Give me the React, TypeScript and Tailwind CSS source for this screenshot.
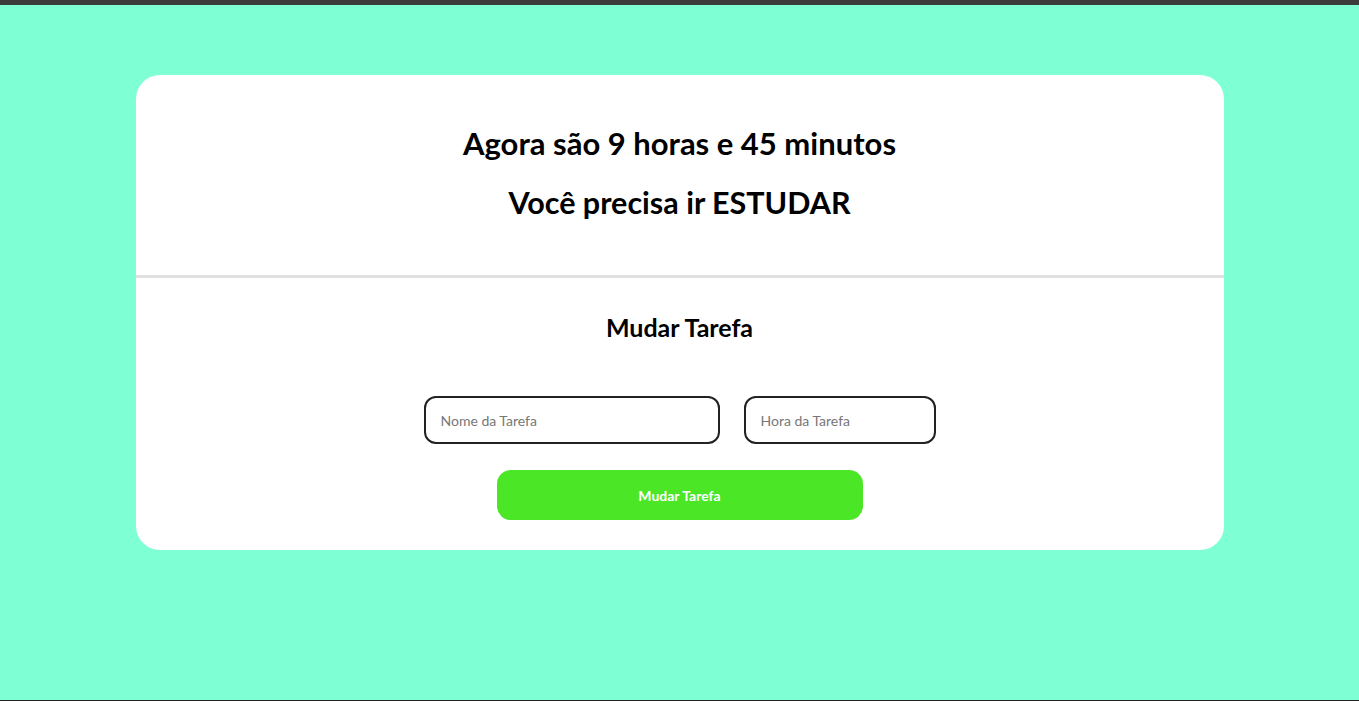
export default function App() {
    return (
        <div className="min-h-screen flex flex-col bg-[#7fffd4] font-['Lato',sans-serif]">
            <div className="h-[5px] bg-[#3c3c3c]" />
            <main className="flex-1 flex flex-col items-center pt-[70px]">
                <div className="w-[1088px] bg-white rounded-[24px] overflow-hidden">
                    {/* Status */}
                    <section className="pt-[50px] pb-[55px] flex flex-col items-center gap-[23px] text-black">
                        <h1 className="text-[31px] leading-[36px] font-bold">Agora são 9 horas e 45 minutos</h1>
                        <h2 className="text-[30.5px] leading-[36px] font-bold">Você precisa ir ESTUDAR</h2>
                    </section>

                    <div className="h-[3px] bg-[#e0e0e0]" />

                    {/* Form */}
                    <section className="pt-[34px] pb-[30px] flex flex-col items-center">
                        <h3 className="text-[25px] leading-[30px] font-bold text-black">Mudar Tarefa</h3>
                        <div className="mt-[54px] flex gap-[24px]">
                            <input
                                type="text"
                                placeholder="Nome da Tarefa"
                                className="w-[296px] h-[48px] px-[15px] border-2 border-[#222] rounded-[12px] text-[14px] placeholder:text-[#777] outline-none"
                            />
                            <input
                                type="text"
                                placeholder="Hora da Tarefa"
                                className="w-[192px] h-[48px] px-[15px] border-2 border-[#222] rounded-[12px] text-[14px] placeholder:text-[#777] outline-none"
                            />
                        </div>
                        <button className="mt-[26px] w-[366px] h-[50px] bg-[#4be625] rounded-[14px] text-white text-[14px] font-bold">
                            Mudar Tarefa
                        </button>
                    </section>
                </div>
            </main>
            <div className="h-px bg-[#222]" />
        </div>
    );
}
